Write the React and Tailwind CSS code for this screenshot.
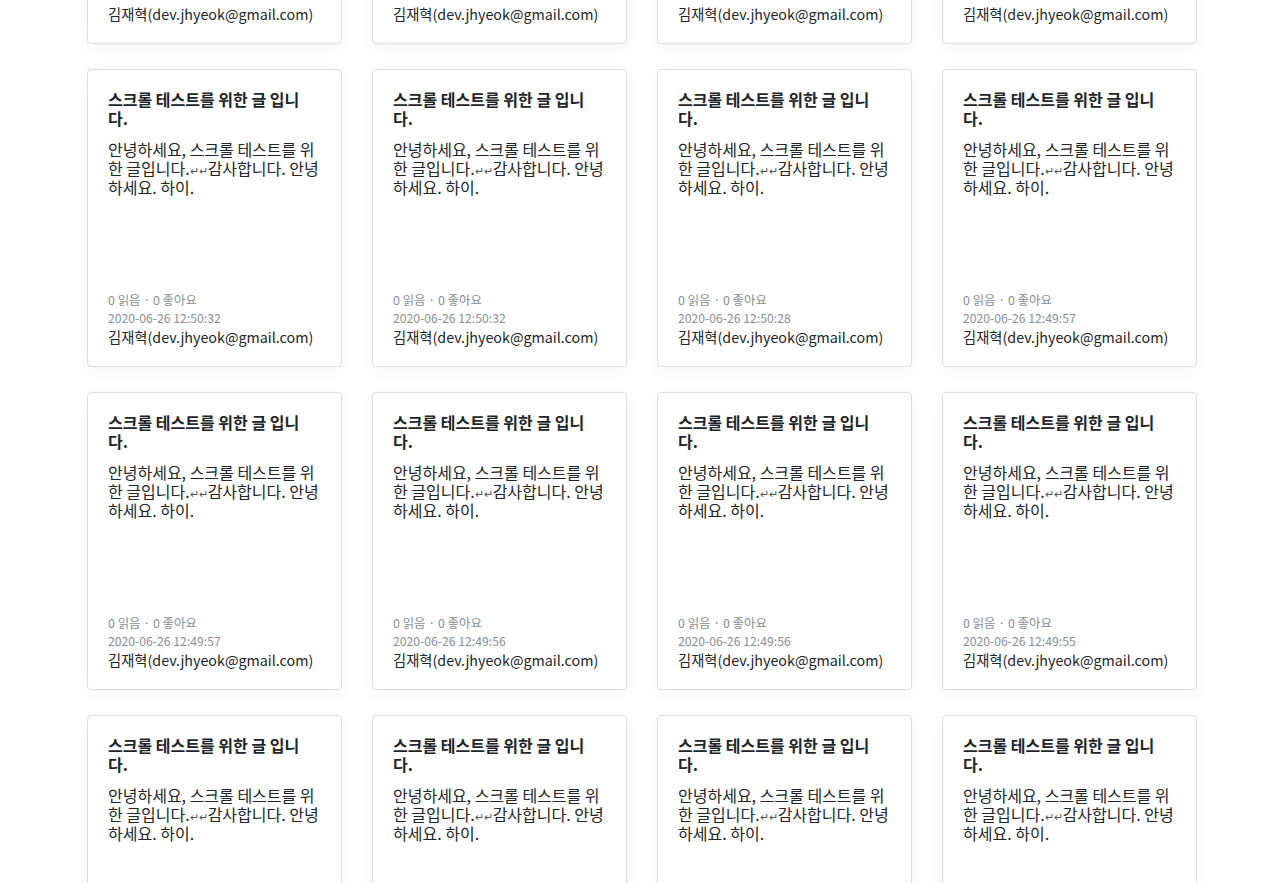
import React from "react";

const times = [
  "2020-06-26 12:50:40", "2020-06-26 12:50:38", "2020-06-26 12:50:36", "2020-06-26 12:50:34",
  "2020-06-26 12:50:32", "2020-06-26 12:50:32", "2020-06-26 12:50:28", "2020-06-26 12:49:57",
  "2020-06-26 12:49:57", "2020-06-26 12:49:56", "2020-06-26 12:49:56", "2020-06-26 12:49:55",
  "2020-06-26 12:49:54", "2020-06-26 12:49:54", "2020-06-26 12:49:53", "2020-06-26 12:49:53",
];

function Card({ time }) {
  return (
    <div className="h-[298px] flex flex-col rounded-[4px] border border-[#dedede] bg-white px-5 pt-5 pb-5 shadow-[0_4px_16px_rgba(0,0,0,0.04)]">
      <div className="max-w-[200px] text-[16px] leading-[19px] font-bold text-[#212529]">스크롤 테스트를 위한 글 입니다.</div>
      <div className="mt-[12px] flex-1 text-[16px] leading-[19px] text-[#212529] break-all">
        안녕하세요, 스크롤 테스트를 위한 글입니다.<span className="text-[11px] leading-none text-[#555]">↵↵</span>감사합니다. 안녕하세요. 하이.
      </div>
      <div className="text-[12.4px] leading-[18px] text-[#868e96]">0 읽음 · 0 좋아요</div>
      <div className="text-[12.2px] leading-[18px] text-[#868e96]">{time}</div>
      <div className="whitespace-nowrap text-[14.3px] leading-[19px] text-[#212529]">김재혁(dev.jhyeok@gmail.com)</div>
    </div>
  );
}

export default function App() {
  return (
    <div
      className="h-[883px] overflow-hidden bg-white"
      style={{ fontFamily: '"Noto Sans CJK KR", "Noto Sans", sans-serif' }}
    >
      <div className="mx-auto mt-[-254px] grid w-[1110px] grid-cols-4 gap-x-[30px] gap-y-[25px]">
        {times.map((t, i) => (
          <Card key={i} time={t} />
        ))}
      </div>
    </div>
  );
}
